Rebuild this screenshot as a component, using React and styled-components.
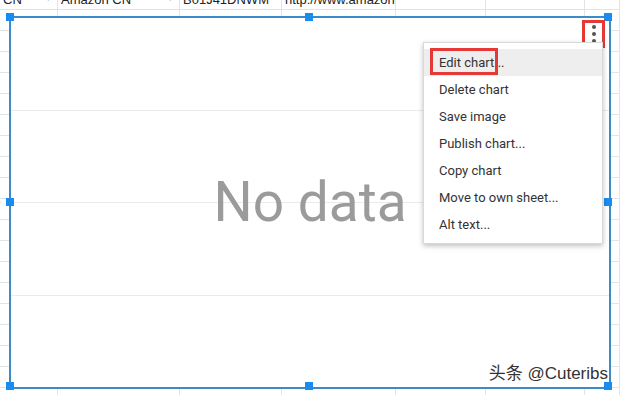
import React from "react"
import { createGlobalStyle, styled } from "styled-components"

const GlobalStyle = createGlobalStyle`
  html, body {
    margin: 0;
    padding: 0;
    background: #fff;
    overflow: hidden;
  }
  body {
    font-family: Roboto, "Liberation Sans", Arial, sans-serif;
  }
`

const COLS = "58px 122px 102px 114px 90px 99px 1fr"

const firstRow = ["CN", "Amazon CN", "B01J41DNWM", "http://www.amazon", "", "", ""]
const dropdownCols = [0, 1]

const menuItems = [
  "Edit chart...",
  "Delete chart",
  "Save image",
  "Publish chart...",
  "Copy chart",
  "Move to own sheet...",
  "Alt text..."
]

const App = () => {
  const rows = Array.from({ length: 20 })

  return (
    <Page>
      <GlobalStyle />
      <Sheet>
        {rows.map((_, r) => (
          <Row key={r}>
            {Array.from({ length: 7 }).map((__, c) => (
              <Cell key={c}>
                {r === 0 && firstRow[c]}
                {r === 0 && dropdownCols.includes(c) && <Caret>▾</Caret>}
              </Cell>
            ))}
          </Row>
        ))}
      </Sheet>

      <Chart>
        <Band />
        <Band />
        <Band />
        <Band $last />
        <NoData>No data</NoData>

        <Handle $x="0%" $y="0%" />
        <Handle $x="50%" $y="0%" />
        <Handle $x="100%" $y="0%" />
        <Handle $x="0%" $y="50%" />
        <Handle $x="100%" $y="50%" />
        <Handle $x="0%" $y="100%" />
        <Handle $x="50%" $y="100%" />
        <Handle $x="100%" $y="100%" />

        <KebabBox>
          <Dot />
          <Dot />
          <Dot />
        </KebabBox>
      </Chart>

      <Menu>
        {menuItems.map((item, i) => (
          <MenuItem key={item} $active={i === 0}>
            {item}
            {i === 0 && <Highlight />}
          </MenuItem>
        ))}
      </Menu>

      <Watermark>头条 @Cuteribs</Watermark>
    </Page>
  )
}

export default App

const Page = styled.div`
  position: relative;
  width: 620px;
  height: 395px;
  overflow: hidden;
  background: #fff;
`

const Sheet = styled.div`
  display: flex;
  flex-direction: column;
  margin-top: -11px;
`

const Row = styled.div`
  display: grid;
  grid-template-columns: ${COLS};
  height: 21px;
`

const Cell = styled.div`
  position: relative;
  box-sizing: border-box;
  border-right: 1px solid #e2e3e3;
  border-bottom: 1px solid #e2e3e3;
  padding: 3px 0 0 3px;
  font-family: "Liberation Sans", Arial, sans-serif;
  font-size: 13px;
  line-height: 15px;
  color: #222;
  white-space: nowrap;
  overflow: hidden;
`

const Caret = styled.span`
  position: absolute;
  right: 6px;
  top: 2px;
  font-size: 9px;
  color: #888;
`

const Chart = styled.div`
  position: absolute;
  left: 9px;
  top: 16px;
  width: 602px;
  height: 373px;
  box-sizing: border-box;
  border: 2px solid #3b8cc9;
  background: #fff;
  display: flex;
  flex-direction: column;
`

const Band = styled.div`
  flex: 1;
  border-bottom: ${(p) => (p.$last ? "none" : "1px solid #ebebeb")};
`

const NoData = styled.div`
  position: absolute;
  inset: 0;
  display: flex;
  align-items: center;
  justify-content: center;
  font-family: Roboto, "Liberation Sans", sans-serif;
  font-size: 55px;
  color: #9b9b9b;
  padding-bottom: 2px;
`

const Handle = styled.div`
  position: absolute;
  left: ${(p) => p.$x};
  top: ${(p) => p.$y};
  width: 8px;
  height: 8px;
  margin: -5px 0 0 -5px;
  background: #1a8cf0;
`

const KebabBox = styled.div`
  position: absolute;
  right: 4px;
  top: 2px;
  width: 23px;
  height: 28px;
  box-sizing: border-box;
  border: 3px solid #e53935;
  display: flex;
  flex-direction: column;
  align-items: center;
  justify-content: center;
  gap: 3px;
`

const Dot = styled.span`
  width: 4px;
  height: 4px;
  border-radius: 50%;
  background: #555;
`

const Menu = styled.div`
  position: absolute;
  left: 423px;
  top: 42px;
  width: 180px;
  box-sizing: border-box;
  padding: 6px 0 5px;
  background: #fff;
  border: 1px solid rgba(0, 0, 0, 0.15);
  box-shadow: 0 2px 5px rgba(0, 0, 0, 0.25);
`

const MenuItem = styled.div`
  position: relative;
  height: 27px;
  line-height: 27px;
  padding-left: 15px;
  font-family: Roboto, "Liberation Sans", sans-serif;
  font-size: 13px;
  color: #333;
  background: ${(p) => (p.$active ? "#eeeeee" : "transparent")};
`

const Highlight = styled.span`
  position: absolute;
  left: 6px;
  top: -1px;
  width: 68px;
  height: 27px;
  box-sizing: border-box;
  border: 3px solid #e53935;
`

const Watermark = styled.div`
  position: absolute;
  right: 12px;
  bottom: 11px;
  font-family: "Liberation Sans", "Noto Sans CJK SC", sans-serif;
  font-size: 17px;
  color: #333;
  text-shadow: 0 0 2px #fff, 0 0 2px #fff;
`
